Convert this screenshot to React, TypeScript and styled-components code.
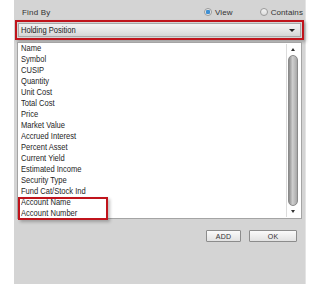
import React from "react";
import styled, { createGlobalStyle } from "styled-components";

const fields = [
  "Name",
  "Symbol",
  "CUSIP",
  "Quantity",
  "Unit Cost",
  "Total Cost",
  "Price",
  "Market Value",
  "Accrued Interest",
  "Percent Asset",
  "Current Yield",
  "Estimated Income",
  "Security Type",
  "Fund Cat/Stock Ind",
  "Account Name",
  "Account Number",
];

const App = () => {
  return (
    <>
      <GlobalStyle />
      <Page>
        <Panel>
          <Header>
            <Label>Find By</Label>
            <Radios>
              <RadioOption>
                <RadioDot $checked />
                <span>View</span>
              </RadioOption>
              <RadioOption>
                <RadioDot />
                <span>Contains</span>
              </RadioOption>
            </Radios>
          </Header>
          <SelectFrame>
            <Select>
              <Narrow>Holding Position</Narrow>
              <Caret />
            </Select>
          </SelectFrame>
          <ListBox>
            <Items>
              {fields.map((f) => (
                <Item key={f}>
                  <Narrow>{f}</Narrow>
                </Item>
              ))}
              <Highlight />
            </Items>
            <ScrollBar>
              <Arrow $up />
              <Thumb />
              <Arrow />
            </ScrollBar>
          </ListBox>
          <Buttons>
            <Button $w={35}>ADD</Button>
            <Button $w={48}>OK</Button>
          </Buttons>
        </Panel>
      </Page>
    </>
  );
};

export default App;

const GlobalStyle = createGlobalStyle`
  body {
    margin: 0;
    background: #ffffff;
    font-family: "Liberation Sans", Arial, sans-serif;
  }
`;

const Page = styled.div`
  width: 320px;
  height: 284px;
  display: flex;
  overflow: hidden;
`;

const Panel = styled.div`
  margin-left: 14px;
  width: 291px;
  height: 284px;
  background: #d4d4d4;
  border-right: 1px solid #e4e4e4;
  display: flex;
  flex-direction: column;
`;

const Header = styled.div`
  height: 16px;
  padding-top: 4px;
  display: flex;
  align-items: center;
  justify-content: space-between;
  padding-left: 8px;
  padding-right: 2px;
  font-size: 8px;
  color: #333;
`;

const Label = styled.span`
  letter-spacing: 0.2px;
`;

const Radios = styled.div`
  display: flex;
  gap: 27px;
`;

const RadioOption = styled.label`
  display: flex;
  align-items: center;
  gap: 3px;
  letter-spacing: 0.1px;
`;

const RadioDot = styled.span<{ $checked?: boolean }>`
  width: 8px;
  height: 8px;
  border-radius: 50%;
  box-sizing: border-box;
  border: 1px solid #9a9a9a;
  background: ${(p) =>
    p.$checked
      ? "radial-gradient(circle, #3f8fd2 0 2px, #e8e8e8 2.5px)"
      : "linear-gradient(#f4f4f4, #dcdcdc)"};
`;

/* the source UI uses a condensed system font; squeeze Arial metrics to match */
const Narrow = styled.span`
  display: inline-block;
  transform: scaleX(0.84);
  transform-origin: left center;
`;

const SelectFrame = styled.div`
  margin-left: 1px;
  width: 289px;
  height: 20px;
  box-sizing: border-box;
  border: 2px solid #c0141c;
  box-shadow: 2px 2px 3px rgba(0, 0, 0, 0.25);
  display: flex;
`;

const Select = styled.div`
  flex: 1;
  margin: 1px;
  border: 1px solid #a8a8a8;
  background: linear-gradient(#f2f2f2 0%, #e6e6e6 50%, #d6d6d6 100%);
  display: flex;
  align-items: center;
  justify-content: space-between;
  padding: 0 5px 0 2px;
  font-size: 9px;
  color: #222;
`;

const Caret = styled.span`
  width: 0;
  height: 0;
  border-left: 3px solid transparent;
  border-right: 3px solid transparent;
  border-top: 3px solid #222;
`;

const ListBox = styled.div`
  margin-top: 2px;
  margin-left: 3px;
  width: 285px;
  height: 177px;
  box-sizing: border-box;
  border: 1px solid #a4a4a4;
  background: #ffffff;
  display: flex;
`;

const Items = styled.div`
  position: relative;
  flex: 1;
  padding-left: 3px;
  display: flex;
  flex-direction: column;
`;

const Item = styled.div`
  height: 11px;
  line-height: 11px;
  font-size: 9px;
  color: #1e1e1e;
  white-space: nowrap;
`;

const Highlight = styled.div`
  position: absolute;
  left: 0;
  top: 154px;
  width: 90px;
  height: 23px;
  box-sizing: border-box;
  border: 2px solid #c0141c;
  box-shadow: 2px 2px 3px rgba(0, 0, 0, 0.25);
`;

const ScrollBar = styled.div`
  width: 12px;
  margin: 1px 2px 1px 0;
  border-left: 1px solid #dcdcdc;
  display: flex;
  flex-direction: column;
  align-items: center;
`;

const Arrow = styled.span<{ $up?: boolean }>`
  margin: 4px 0;
  width: 0;
  height: 0;
  border-left: 2px solid transparent;
  border-right: 2px solid transparent;
  ${(p) =>
    p.$up ? "border-bottom: 3px solid #333;" : "border-top: 3px solid #333;"}
`;

const Thumb = styled.div`
  flex: 1;
  width: 10px;
  border-radius: 5px;
  background: linear-gradient(90deg, #8c8c8c, #cfcfcf 45%, #a8a8a8);
  border: 1px solid #8a8a8a;
  box-sizing: border-box;
`;

const Buttons = styled.div`
  margin-top: 11px;
  padding-right: 8px;
  display: flex;
  justify-content: flex-end;
  gap: 8px;
`;

const Button = styled.button<{ $w: number }>`
  width: ${(p) => p.$w}px;
  height: 12px;
  padding: 0;
  border: 1px solid #8c8c8c;
  border-radius: 1px;
  background: linear-gradient(#fafafa, #e2e2e2);
  font-family: "Liberation Sans", Arial, sans-serif;
  font-size: 7px;
  color: #333;
  letter-spacing: 0.3px;
`;
